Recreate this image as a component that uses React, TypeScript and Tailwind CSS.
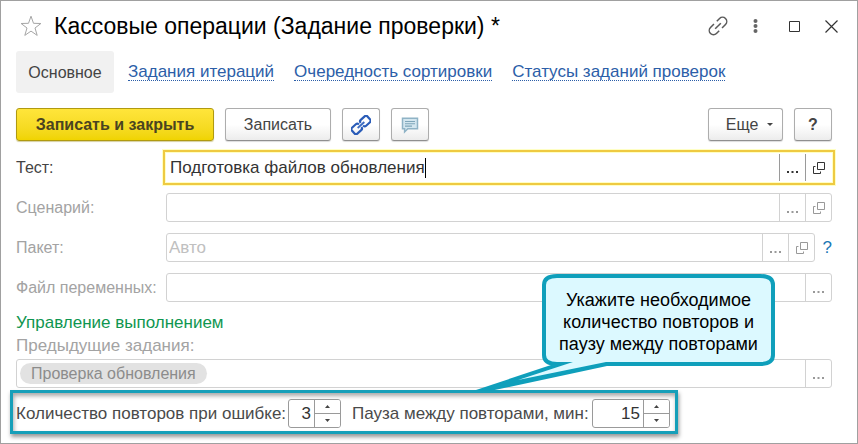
import type { ReactNode } from 'react'

const SPIN_ARROW = 'flex flex-1 items-center justify-center bg-white'

function StarIcon() {
  return (
    <svg className="h-6 w-6" viewBox="0 0 24 24" fill="none" stroke="#a6a6a6" strokeWidth="1">
      <path d="M12 2.2l2.5 7.1 7.4.2-5.9 4.5 2.2 7.4-6.2-4.3-6.2 4.3L8 14 2.1 9.500l7.400-.2z" />
    </svg>
  )
}

function LinkIcon() {
  return (
    <svg className="h-6 w-6" viewBox="0 0 24 24" fill="none" stroke="#5a5a5a" strokeWidth="1.5">
      <g transform="rotate(-45 12 12)">
        <path d="M9.500 16.200H5.600a4.200 4.200 0 0 1 0-8.400h4.900" />
        <path d="M14.500 7.800h3.900a4.200 4.200 0 0 1 0 8.400h-4.900" />
        <path d="M8 12h8" />
      </g>
    </svg>
  )
}

function ChainIcon() {
  return (
    <svg className="h-5 w-5" viewBox="0 0 20 20" fill="none" stroke="#2a5cb8" strokeWidth="2.2">
      <g transform="rotate(-42 10 10)">
        <rect x="-0.500" y="6" width="9.200" height="8" rx="2" />
        <rect x="11.300" y="6" width="9.200" height="8" rx="2" />
        <path d="M5.500 10h9" stroke="#fff" strokeWidth="3.600" />
        <path d="M5.500 10h9" stroke="#3d6cc2" strokeWidth="1.800" />
      </g>
    </svg>
  )
}

function CommentIcon() {
  return (
    <svg className="h-5 w-5" viewBox="0 0 20 20" fill="#d3e6ef" stroke="#8fb3c6" strokeWidth="1.500">
      <path d="M2.500 3.200h15v10.600H7.800L4.600 17v-3.200H2.500z" />
      <path d="M5 6.500h10M5 8.800h10M5 11.100h7" stroke="#7fa6ba" strokeWidth="1.100" />
    </svg>
  )
}

function OpenIcon() {
  return (
    <svg className="h-3 w-3 shrink-0" viewBox="0 0 12 12" fill="none" stroke="currentColor" strokeWidth="1">
      <path d="M4.500.5h7v7h-7zM2.500 4.500h-2v7h7v-2" />
    </svg>
  )
}

function Dots() {
  return (
    <svg className="mt-2 h-[2px] w-[11px] shrink-0" viewBox="0 0 11 2" fill="currentColor">
      <path d="M0 0h2v2H0zM4.500 0h2v2h-2zM9 0h2v2H9z" />
    </svg>
  )
}

type FieldProps = {
  id: string
  value?: string
  placeholder?: string
  active?: boolean
  open?: boolean
  children?: ReactNode
}

function Field({ id, value, placeholder, active, open, children }: FieldProps) {
  const side = active
    ? 'flex w-[26px] shrink-0 items-center justify-center border-l border-[#9a9a9a] text-[#333]'
    : 'flex w-[26px] shrink-0 items-center justify-center border-l border-[#d2d2d2] text-[#999]'
  return (
    <div
      className={
        active
          ? 'relative flex h-[29px] min-w-0 flex-1 border border-white bg-white shadow-[0_0_0_4px_#ffffc4] outline-2 outline-offset-1 outline-[#efca42]'
          : 'flex h-[29px] min-w-0 flex-1 rounded-[3px] border border-[#d2d2d2] bg-white'
      }
    >
      {children ?? (
        <div className="flex min-w-0 flex-1 items-center">
          {active ? (
            <>
              <input
                id={id}
                defaultValue={value}
                className="field-sizing-content min-w-0 bg-transparent pl-[3px] text-[17px] text-[#333] outline-none"
              />
              <span className="h-5 w-px bg-black" />
            </>
          ) : (
            <input
              id={id}
              defaultValue={value}
              placeholder={placeholder}
              className="w-full min-w-0 bg-transparent pl-[2px] text-[17px] outline-none placeholder:text-[#c0c0c0]"
            />
          )}
        </div>
      )}
      <button type="button" aria-label="Выбрать" className={side}>
        <Dots />
      </button>
      {open && (
        <button type="button" aria-label="Открыть" className={side}>
          <OpenIcon />
        </button>
      )}
    </div>
  )
}

function Spinner({ id, value, wide }: { id: string; value: string; wide?: boolean }) {
  return (
    <div
      className={
        wide
          ? 'flex h-[29px] w-[78px] overflow-hidden rounded-[3px] border border-[#9a9a9a] bg-white'
          : 'flex h-[29px] w-[53px] overflow-hidden rounded-[3px] border border-[#9a9a9a] bg-white'
      }
    >
      <input
        id={id}
        inputMode="numeric"
        defaultValue={value}
        className="min-w-0 flex-1 bg-transparent pr-[3px] text-right text-[#333] outline-none"
      />
      <div className="flex w-[26px] flex-col border-l border-[#9a9a9a]">
        <button type="button" aria-label="Увеличить" className={SPIN_ARROW}>
          <svg className="h-[3px] w-[5px]" viewBox="0 0 5 3" fill="#444">
            <path d="M2.500 0L5 3H0z" />
          </svg>
        </button>
        <div className="h-px bg-[#9a9a9a]" />
        <button type="button" aria-label="Уменьшить" className={SPIN_ARROW}>
          <svg className="h-[3px] w-[5px]" viewBox="0 0 5 3" fill="#444">
            <path d="M0 0h5L2.500 3z" />
          </svg>
        </button>
      </div>
    </div>
  )
}

function Row({ id, label, active, children }: { id: string; label: string; active?: boolean; children: ReactNode }) {
  return (
    <div className="flex items-center">
      <label
        htmlFor={id}
        className={active ? 'w-[150px] shrink-0 whitespace-nowrap text-[#444]' : 'w-[150px] shrink-0 whitespace-nowrap text-[#a3a3a3]'}
      >
        {label}
      </label>
      {children}
    </div>
  )
}

const links = ['Задания итераций', 'Очередность сортировки', 'Статусы заданий проверок']

const plainButton =
  'flex h-[33px] items-center justify-center rounded-[3px] border border-[#adadad] border-b-[#8f8f8f] bg-linear-to-b from-white from-50% to-[#ececec] text-[#444] shadow-[0_1px_1px_#dcdcdc]'

export default function App() {
  return (
    <main className="border border-[#a0a0a0] bg-white pr-[25px] pb-[9px] pl-[15px] font-['Liberation_Sans',Arial,sans-serif] text-[16px] leading-[23px]">
      {/* title bar */}
      <header className="-mr-[10px] flex h-[50px] items-center">
        <button type="button" aria-label="Избранное" className="mr-[11px] ml-[3px]">
          <StarIcon />
        </button>
        <h1 className="flex-1 text-[23px] whitespace-nowrap text-black">Кассовые операции (Задание проверки) *</h1>
        <button type="button" aria-label="Получить ссылку" className="mr-[23px]">
          <LinkIcon />
        </button>
        <button type="button" aria-label="Ещё" className="mr-[31px]">
          <svg className="h-4 w-[5px]" viewBox="0 0 5 16" fill="#666">
            <circle cx="2.500" cy="3" r="2" />
            <circle cx="2.500" cy="8" r="2" />
            <circle cx="2.500" cy="13" r="2" />
          </svg>
        </button>
        <button type="button" aria-label="Развернуть" className="mr-[25px]">
          <svg className="h-[11px] w-[11px]" viewBox="0 0 11 11" fill="none" stroke="#333">
            <path d="M.5.5h10v10H.5z" />
          </svg>
        </button>
        <button type="button" aria-label="Закрыть" className="mr-1">
          <svg className="h-[13px] w-[13px]" viewBox="0 0 13 13" fill="none" stroke="#333" strokeWidth="1.200">
            <path d="M.5.5l12 12M12.500.5l-12 12" />
          </svg>
        </button>
      </header>

      <nav className="flex h-[42px] items-center gap-5 whitespace-nowrap">
        <a href="#main" className="mr-[-6px] flex h-full w-[98px] items-center justify-center rounded-[3px] bg-[#f1f1f1] text-[#444]">
          Основное
        </a>
        {links.map((text) => (
          <a key={text} href="#list" className="border-b border-dotted border-[#2c5ea8] text-[17px] leading-[17px] text-[#2c5ea8]">
            {text}
          </a>
        ))}
      </nav>

      {/* commands */}
      <div className="mt-[15px] flex gap-[11px] whitespace-nowrap">
        <button
          type="button"
          className="h-[33px] w-[198px] rounded-[3px] border border-[#b09a10] bg-linear-to-b from-[#ffe53a] to-[#f0d400] font-bold text-[#4a4420] shadow-[0_1px_1px_#d5cfa0]"
        >
          Записать и закрыть
        </button>
        <button type="button" className={`${plainButton} w-[106px]`}>
          Записать
        </button>
        <button type="button" aria-label="Ссылка" className={`${plainButton} w-[38px]`}>
          <ChainIcon />
        </button>
        <button type="button" aria-label="Комментарий" className={`${plainButton} w-[38px]`}>
          <CommentIcon />
        </button>
        <button type="button" className={`${plainButton} ml-auto w-[75px] gap-[9px] pl-2`}>
          Еще
          <svg className="h-[3px] w-[6px]" viewBox="0 0 6 3" fill="#444">
            <path d="M0 0h6L3 3z" />
          </svg>
        </button>
        <button type="button" className={`${plainButton} w-[38px] font-bold`}>
          ?
        </button>
      </div>

      <form>
        <div className="mt-3 flex flex-col gap-[11px]">
          <Row id="test" label="Тест:" active>
            <Field id="test" value="Подготовка файлов обновления" active open />
          </Row>
          <Row id="scenario" label="Сценарий:">
            <Field id="scenario" open />
          </Row>
          <Row id="package" label="Пакет:">
            <Field id="package" placeholder="Авто" open />
            <a href="#help" className="w-[17px] text-right text-[17px] text-[#1b78b5]">
              ?
            </a>
          </Row>
          <Row id="vars" label="Файл переменных:">
            <Field id="vars" />
          </Row>
        </div>

        <h2 className="mt-[9px] text-[17px] text-[#0f9650]">Управление выполнением</h2>
        <label htmlFor="previous" className="block text-[17px] text-[#a3a3a3]">
          Предыдущие задания:
        </label>
        <div className="mt-[2px] flex">
          <Field id="previous">
            <div className="flex min-w-0 flex-1 items-center pl-[3px]">
              <span className="h-[21px] rounded-full bg-[#e2e2e2] px-[11px] leading-[21px] text-[#8c8c8c]">
                Проверка обновления
              </span>
              <input id="previous" className="min-w-0 flex-1 bg-transparent outline-none" />
            </div>
          </Field>
        </div>

        {/* highlighted retry settings */}
        <div className="relative mt-[2px] -ml-[6px] flex w-fit items-center border-3 border-[#169fb9] pt-[6px] pr-[5px] pb-[3px] pl-[3px] text-[17px] whitespace-nowrap text-[#4a4a4a] shadow-[1px_3px_4px_#999,inset_1px_3px_4px_#aaa]">
          <label htmlFor="retries" className="w-[272px]">
            Количество повторов при ошибке:
          </label>
          <Spinner id="retries" value="3" />
          <label htmlFor="pause" className="w-[251px] pl-[11px]">
            Пауза между повторами, мин:
          </label>
          <Spinner id="pause" value="15" wide />

          {/* callout */}
          <div className="absolute bottom-[39px] left-[459px] h-[120px] w-[304px]">
            <svg className="absolute inset-0 h-full w-full" viewBox="0 0 304 120">
              <path
                d="M85 4H288Q301 4 301 13V83Q301 92 288 92H85Q72 92 72 83V13Q72 4 85 4z"
                fill="#dcf9ff"
                stroke="#0f9fbb"
                strokeWidth="4"
              />
              <path d="M79 93L1 119H18L135 94z" fill="#0f9fbb" />
              <path d="M104 89L46 108L134 90V89z" fill="#dcf9ff" />
            </svg>
            <p className="relative ml-[69px] pt-[17px] text-center text-[18px] leading-[22px] text-black">
              Укажите необходимое
              <br />
              количество повторов и
              <br />
              паузу между повторами
            </p>
          </div>
        </div>
      </form>
    </main>
  )
}
